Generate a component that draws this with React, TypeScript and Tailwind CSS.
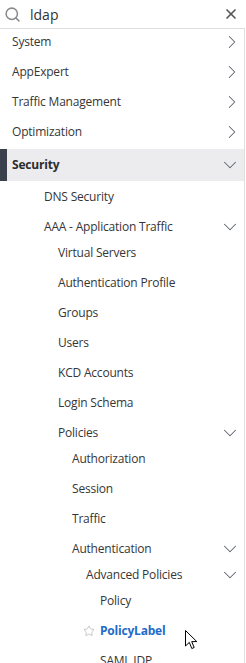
import { Search, X, ChevronRight, ChevronDown, Star } from 'lucide-react';

type Item = {
  label: string;
  indent: string;
  open?: boolean;
  children?: Item[];
};

const TREE: Item[] = [
  { label: 'DNS Security', indent: 'pl-[44px]' },
  {
    label: 'AAA - Application Traffic',
    indent: 'pl-[44px]',
    open: true,
    children: [
      { label: 'Virtual Servers', indent: 'pl-[58px]' },
      { label: 'Authentication Profile', indent: 'pl-[58px]' },
      { label: 'Groups', indent: 'pl-[58px]' },
      { label: 'Users', indent: 'pl-[58px]' },
      { label: 'KCD Accounts', indent: 'pl-[58px]' },
      { label: 'Login Schema', indent: 'pl-[58px]' },
      {
        label: 'Policies',
        indent: 'pl-[58px]',
        open: true,
        children: [
          { label: 'Authorization', indent: 'pl-[72px]' },
          { label: 'Session', indent: 'pl-[72px]' },
          { label: 'Traffic', indent: 'pl-[72px]' },
          {
            label: 'Authentication',
            indent: 'pl-[72px]',
            open: true,
            children: [
              {
                label: 'Advanced Policies',
                indent: 'pl-[86px]',
                open: true,
                children: [
                  { label: 'Policy', indent: 'pl-[100px]' },
                  { label: 'PolicyLabel', indent: 'pl-[100px]' },
                  { label: 'SAML IDP', indent: 'pl-[100px]' },
                ],
              },
            ],
          },
        ],
      },
    ],
  },
];

const TOP = ['System', 'AppExpert', 'Traffic Management', 'Optimization'];

function Row({ item }: { item: Item }) {
  const active = item.label === 'PolicyLabel';
  return (
    <>
      <div className={`relative h-[30px] flex items-center justify-between pt-[2px] pr-[3px] ${item.indent}`}>
        {active && (
          <Star size={12} strokeWidth={1.5} className="absolute left-[83px] top-[10px] text-[#b4b4b4]" />
        )}
        <span className={active ? 'font-bold text-[#1f6bc6]' : 'text-[#363636]'}>{item.label}</span>
        {item.children && <ChevronDown size={22} strokeWidth={1.1} className="text-[#5b606b]" />}
      </div>
      {item.open && item.children && (
        <div className="-mt-[4px]">
          {item.children.map((c) => (
            <Row key={c.label} item={c} />
          ))}
        </div>
      )}
    </>
  );
}

export default function App() {
  return (
    <div className="relative w-[246px] h-[663px] overflow-hidden bg-white text-[12px] tracking-[-0.2px] font-['Open_Sans',sans-serif]">
      <div className="h-[28px] flex items-center pl-[4px] pr-[7px]">
        <Search size={17} strokeWidth={2.2} className="text-[#8a8a8a]" />
        <span className="ml-[9px] text-[14px] tracking-normal text-[#333]">ldap</span>
        <X size={16} strokeWidth={2.5} className="ml-auto text-[#555]" />
      </div>
      <div className="w-[245px] border-t border-r border-[#dedede]">
        {TOP.map((t) => (
          <div key={t} className="h-[30px] flex items-center justify-between pl-[12px] pr-[1px] pb-[5px] text-[#363636]">
            <span>{t}</span>
            <ChevronRight size={22} strokeWidth={1.1} className="text-[#5b606b]" />
          </div>
        ))}
        <div className="h-[32px] flex items-center justify-between bg-[#ececef] border-l-[7px] border-[#3a404c] pl-[5px] pr-[3px]">
          <span className="font-bold text-[#2d2d2d]">Security</span>
          <ChevronDown size={22} strokeWidth={1.1} className="text-[#5b606b]" />
        </div>
        {TREE.map((i) => (
          <Row key={i.label} item={i} />
        ))}
      </div>
      <svg className="absolute left-[185px] top-[630px]" width="13" height="20" viewBox="0 0 13 20">
        <path d="M0.5 0.5 L0.5 16 L4.3 12.4 L6.8 18.5 L9.2 17.5 L6.7 11.6 L11.8 11.6 Z" fill="#fff" stroke="#000" strokeWidth="1" strokeLinejoin="miter" />
      </svg>
    </div>
  );
}
